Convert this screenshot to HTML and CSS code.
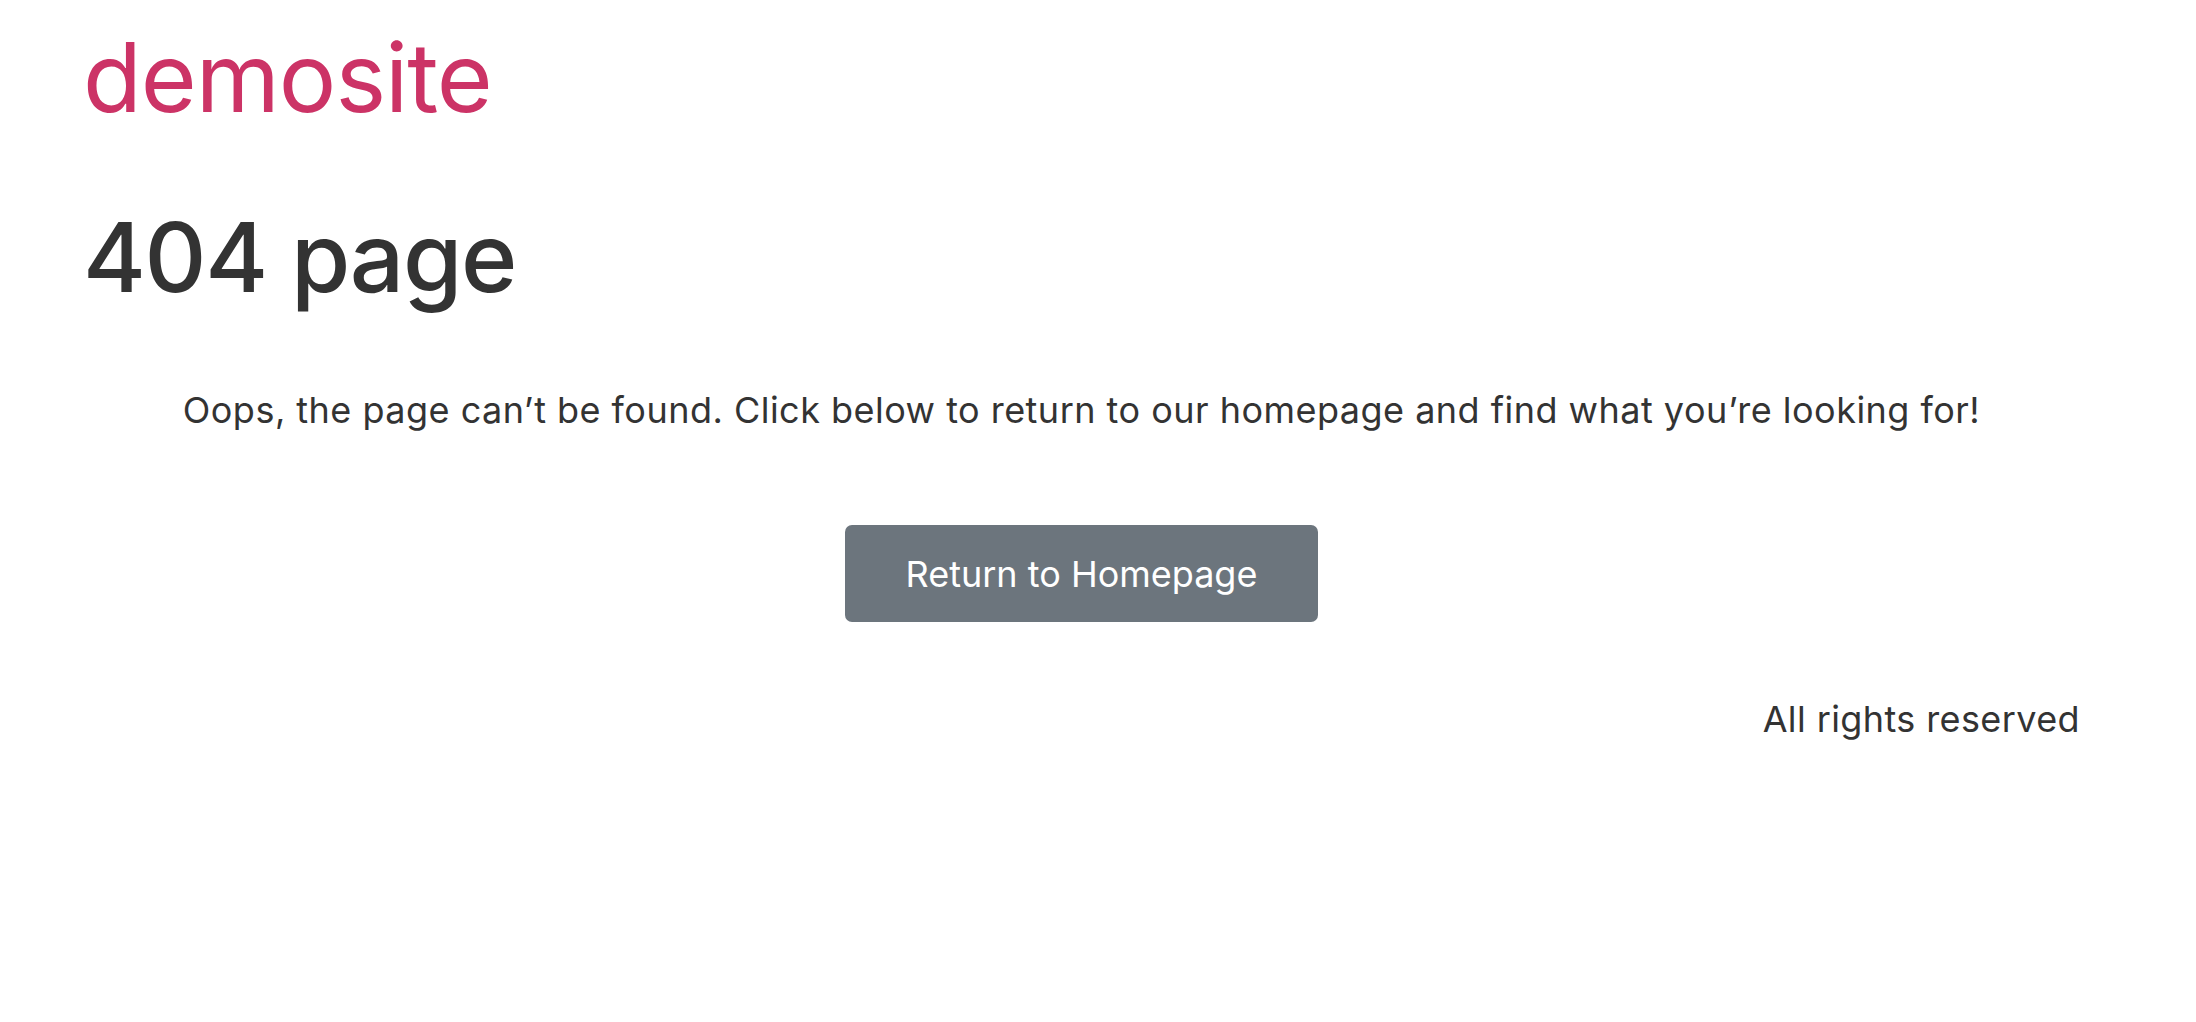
FILE: index.html
```html
<!DOCTYPE html>
<html lang="en">
<head>
    <meta charset="UTF-8">
    <meta name="viewport" content="width=device-width, initial-scale=1.0">
    <title>404 page - demosite</title>
    <link rel="stylesheet" href="styles.css">
</head>
<body>
    <header class="site-header">
        <a class="brand" href="#">demosite</a>
    </header>
    <main class="page">
        <h1>404 page</h1>
        <p class="message">Oops, the page can’t be found. Click below to return to our homepage and find what you’re looking for!</p>
        <div class="actions">
            <a class="btn" href="#">Return to Homepage</a>
        </div>
    </main>
    <footer class="site-footer">All rights reserved</footer>
</body>
</html>
```

FILE: styles.css
```css
body { font-family: Inter, "Noto Sans", Arial, sans-serif; margin: 0; padding: 0 116px 0 83px; background: #fff; color: #333; }
.site-header { padding-top: 20px; }
.brand { font-size: 96px; line-height: 1.2; color: #cc3366; text-decoration: none; letter-spacing: -1px; display: inline-block; }
.page { padding-top: 65px; }
h1 { font-size: 96px; line-height: 1.2; font-weight: 500; margin: 0; letter-spacing: -1.4px; }
.message { font-size: 36px; line-height: 1.5; margin: 68px 0 0; text-align: center; letter-spacing: 0.48px; }
.actions { display: flex; justify-content: center; margin-top: 88px; }
.btn { font-size: 36px; line-height: 1.5; padding: 21.5px 61px; background: #6c757d; color: #fff; text-decoration: none; border-radius: 7px; }
.site-footer { font-size: 36px; line-height: 1.5; text-align: right; margin-top: 70px; letter-spacing: 0.4px; }
```
